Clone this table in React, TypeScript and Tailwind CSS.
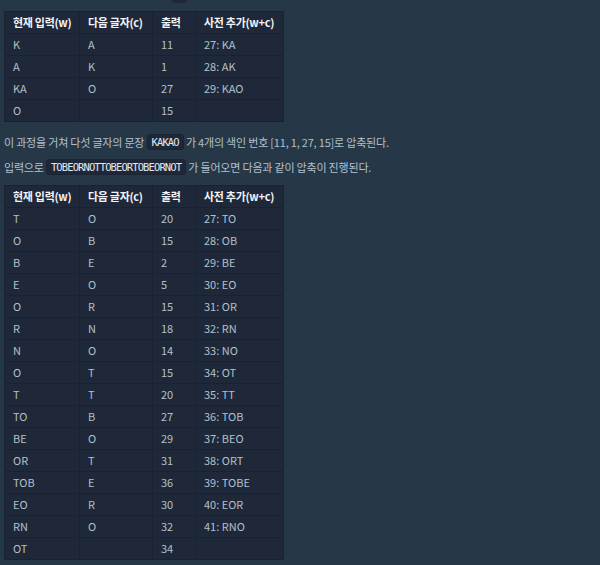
import React from 'react';

type Row = [string, string, string, string];

const headers = ['현재 입력(w)', '다음 글자(c)', '출력', '사전 추가(w+c)'];

const kakaoRows: Row[] = [
  ['K', 'A', '11', '27: KA'],
  ['A', 'K', '1', '28: AK'],
  ['KA', 'O', '27', '29: KAO'],
  ['O', '', '15', ''],
];

const tobeRows: Row[] = [
  ['T', 'O', '20', '27: TO'],
  ['O', 'B', '15', '28: OB'],
  ['B', 'E', '2', '29: BE'],
  ['E', 'O', '5', '30: EO'],
  ['O', 'R', '15', '31: OR'],
  ['R', 'N', '18', '32: RN'],
  ['N', 'O', '14', '33: NO'],
  ['O', 'T', '15', '34: OT'],
  ['T', 'T', '20', '35: TT'],
  ['TO', 'B', '27', '36: TOB'],
  ['BE', 'O', '29', '37: BEO'],
  ['OR', 'T', '31', '38: ORT'],
  ['TOB', 'E', '36', '39: TOBE'],
  ['EO', 'R', '30', '40: EOR'],
  ['RN', 'O', '32', '41: RNO'],
  ['OT', '', '34', ''],
];

const colWidths = ['w-[75px]', 'w-[73px]', 'w-[43px]', 'w-[88px]'];

const LzwTable: React.FC<{ rows: Row[]; className?: string }> = ({ rows, className }) => (
  <table className={`border-collapse bg-[#1e2839] table-fixed ${className || ''}`}>
    <thead>
      <tr className="h-[22px]">
        {headers.map((h, i) => (
          <th
            key={h}
            className={`${colWidths[i]} border border-[#172334] pl-2 text-left font-bold tracking-[-0.3px] text-[#f1f4f8] text-[11px] leading-none`}
          >
            {h}
          </th>
        ))}
      </tr>
    </thead>
    <tbody>
      {rows.map((r, ri) => (
        <tr key={ri} className="h-[22px]">
          {r.map((c, ci) => (
            <td key={ci} className="border border-[#172334] pl-2 text-[11px] leading-none text-[#b2c0cc]">
              {c}
            </td>
          ))}
        </tr>
      ))}
    </tbody>
  </table>
);

const Code: React.FC<{ children: React.ReactNode }> = ({ children }) => (
  <code className="inline-block rounded-[3px] border border-[#1a2433] bg-[#1e2839] px-[4px] py-0 font-['DejaVu_Sans_Mono',monospace] text-[10.5px] leading-[14px] tracking-[-0.9px] text-[#e3e9f0] align-[1px]">
    {children}
  </code>
);

export default function App() {
  return (
    <div className="min-h-[565px] w-[600px] bg-[#263747] pl-1 font-['Noto_Sans_CJK_KR','Noto_Sans',sans-serif] text-[#b2c0cc]">
      <div className="ml-[168px] h-[3px] w-[15px] rounded-b-[3px] bg-[#1e2839]" />
      <LzwTable rows={kakaoRows} className="mt-2" />
      <p className="mt-2 text-[11px] leading-6 tracking-[-0.2px]">
        이 과정을 거쳐 다섯 글자의 문장 <Code>KAKAO</Code> 가 4개의 색인 번호 [11, 1, 27, 15]로 압축된다.
      </p>
      <p className="mt-px text-[11px] leading-6 tracking-[-0.2px]">
        입력으로 <Code>TOBEORNOTTOBEORTOBEORNOT</Code> 가 들어오면 다음과 같이 압축이 진행된다.
      </p>
      <LzwTable rows={tobeRows} className="mt-[6px]" />
    </div>
  );
}
